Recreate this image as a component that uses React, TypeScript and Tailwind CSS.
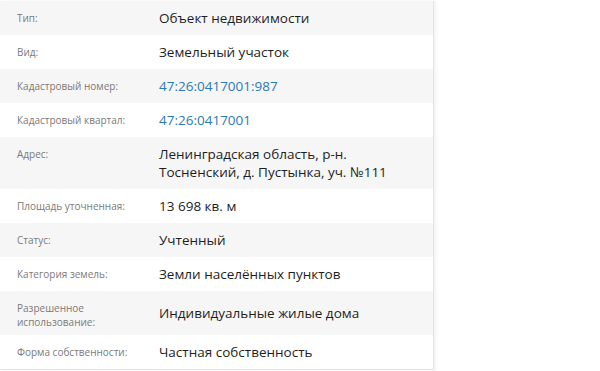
const rows: { label: string; value: string; link?: boolean }[] = [
  { label: 'Тип:', value: 'Объект недвижимости' },
  { label: 'Вид:', value: 'Земельный участок' },
  { label: 'Кадастровый номер:', value: '47:26:0417001:987', link: true },
  { label: 'Кадастровый квартал:', value: '47:26:0417001', link: true },
  { label: 'Адрес:', value: 'Ленинградская область, р-н. Тосненский, д. Пустынка, уч. №111' },
  { label: 'Площадь уточненная:', value: '13 698 кв. м' },
  { label: 'Статус:', value: 'Учтенный' },
  { label: 'Категория земель:', value: 'Земли населённых пунктов' },
  { label: 'Разрешенное использование:', value: 'Индивидуальные жилые дома' },
  { label: 'Форма собственности:', value: 'Частная собственность' },
];

export default function App() {
  return (
    <div
      className="w-[600px] h-[371px] bg-white overflow-hidden pt-px"
      style={{ fontFamily: '"Open Sans", "Noto Sans", sans-serif' }}
    >
      <div className="w-[434px] border-r border-b border-[#e3e3e3] shadow-[2px_0_3px_rgba(0,0,0,0.05)]">
        {rows.map((row, i) => (
          <div
            key={row.label}
            className={`flex ${i % 2 === 0 ? 'bg-[#f6f6f6]' : 'bg-white'}`}
          >
            <div className="w-[159px] shrink-0 pl-[17px] pr-2 pt-[10px] pb-[6px] text-[10px] leading-[14px] text-[#7a7a7a]">
              {row.label}
            </div>
            <div
              className={`flex-1 flex items-center py-2 pr-4 text-[13.5px] leading-[18px] ${
                row.link ? 'text-[#2a7ab8]' : 'text-[#1e1e1e]'
              }`}
            >
              <span className="max-w-[240px]">{row.value}</span>
            </div>
          </div>
        ))}
      </div>
    </div>
  );
}
